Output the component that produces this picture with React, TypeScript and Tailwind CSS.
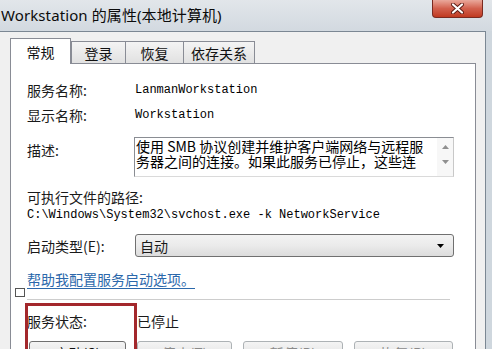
import React from "react";

const cjk = "font-['Noto_Sans_CJK_SC','Noto_Sans',sans-serif]";
const mono = "font-['Liberation_Mono','Noto_Sans_CJK_SC',monospace]";

function Tab({ label, selected, w, first }: { label: string; selected?: boolean; w: string; first?: boolean }) {
  if (selected) {
    return (
      <div
        className={`relative z-10 ${w} h-[26px] -mb-px bg-white border border-b-0 border-[#898c95] flex items-start justify-center pt-[3px] text-[14px] leading-[20px] text-[#111]`}
      >
        {label}
      </div>
    );
  }
  return (
    <div
      className={`${w} h-[22px] ${first ? "" : "-ml-px"} bg-gradient-to-b from-[#f4f4f4] to-[#e1e1e1] border border-b-0 border-[#898c95] flex items-start justify-center pt-[1px] text-[14px] leading-[20px] text-[#111]`}
    >
      {label}
    </div>
  );
}

function Btn({ label, w, enabled }: { label: string; w: string; enabled?: boolean }) {
  return (
    <div
      className={`${w} h-[23px] shrink-0 rounded-[3px] border ${
        enabled ? "border-[#707070] text-[#111]" : "border-[#adb2b5] text-[#8a8a8a]"
      } bg-gradient-to-b from-[#f4f4f4] to-[#dedede] flex items-center justify-center text-[14px] leading-[20px]`}
    >
      {label}
    </div>
  );
}

export default function App() {
  return (
    <div className={`relative w-[492px] h-[349px] overflow-hidden flex flex-col bg-[#d3dae1] ${cjk}`}>
      {/* Title bar */}
      <div className="h-[31px] shrink-0 flex items-start bg-gradient-to-b from-[#e2e6ea] to-[#d2d9e0]">
        <div className="pl-[1px] pt-[4px] text-[15px] leading-[22px] text-[#0b0b0b] font-['Noto_Sans','Noto_Sans_CJK_SC',sans-serif] tracking-[0.1px]">
          Workstation 的属性(本地计算机)
        </div>
        <div className="ml-auto mr-[9px] w-[51px] h-[18px] rounded-b-[4px] border border-t-0 border-[#7a2a20] bg-gradient-to-b from-[#e9a89b] via-[#d2604d] to-[#c0391f] flex items-center justify-center">
          <svg width="13" height="11" viewBox="0 0 13 11">
            <path d="M2 1.5 L11 9.5 M11 1.5 L2 9.5" stroke="#5b1a12" strokeWidth="4" strokeLinecap="round" />
            <path d="M2 1.5 L11 9.5 M11 1.5 L2 9.5" stroke="#ffffff" strokeWidth="2.2" strokeLinecap="round" />
          </svg>
        </div>
      </div>

      {/* Body */}
      <div className="flex flex-1 min-h-0">
        <div className="flex-1 flex flex-col bg-[#f0f0f0] border-t border-r border-[#7b8793] pt-[6px] pl-[10px] pr-[9px]">
          {/* Tabs */}
          <div className="flex items-end h-[25px]">
            <Tab label="常规" selected w="w-[61px]" />
            <Tab label="登录" w="w-[55px]" first />
            <Tab label="恢复" w="w-[59px]" />
            <Tab label="依存关系" w="w-[72px]" />
          </div>

          {/* Panel */}
          <div className="flex-1 bg-white border border-[#898c95] pl-[16px] pt-[16px] text-[14px] leading-[20px] text-[#1a1a1a]">
            <div className="flex items-center h-[20px]">
              <div className="w-[108px]">服务名称:</div>
              <div className={`${mono} text-[12px] text-black`}>LanmanWorkstation</div>
            </div>
            <div className="flex items-center h-[20px] mt-[5px]">
              <div className="w-[108px]">显示名称:</div>
              <div className={`${mono} text-[12px] text-black`}>Workstation</div>
            </div>

            <div className="flex items-start mt-[12px]">
              <div className="w-[107px] pt-[3px]">描述:</div>
              <div className="w-[320px] h-[40px] border border-[#8a8d93] border-r-[#c8c8c8] border-b-[#dadada] flex">
                <div className="flex-1 min-w-0 pl-[1px] pt-[1px] text-[14px] leading-[15px] text-black whitespace-nowrap">
                  <div>使用 SMB 协议创建并维护客户端网络与远程服</div>
                  <div>务器之间的连接。如果此服务已停止，这些连</div>
                </div>
                <div className="w-[16px] shrink-0 flex flex-col items-center bg-[#f7f7f7] pt-[7px]">
                  <svg width="7" height="4" viewBox="0 0 7 4">
                    <path d="M0 4 L3.5 0 L7 4 Z" fill="#8f8f8f" />
                  </svg>
                  <svg width="7" height="4" viewBox="0 0 7 4" className="mt-[11px]">
                    <path d="M0 0 L3.5 4 L7 0 Z" fill="#8f8f8f" />
                  </svg>
                </div>
              </div>
            </div>

            <div className="mt-[10px] h-[20px] flex items-center">可执行文件的路径:</div>
            <div className={`${mono} text-[12px] leading-[16px] h-[16px] text-black whitespace-nowrap`}>
              C:\Windows\System32\svchost.exe -k NetworkService
            </div>

            <div className="flex items-center mt-[11px]">
              <div className="w-[108px]">启动类型(E):</div>
              <div className="w-[319px] h-[23px] rounded-[3px] border border-[#707070] bg-gradient-to-b from-[#f3f3f3] via-[#ebebeb] to-[#dcdcdc] flex items-center pl-[4px] pr-[9px]">
                <span className="flex-1">自动</span>
                <svg width="7" height="4" viewBox="0 0 7 4">
                  <path d="M0 0 L7 0 L3.5 4 Z" fill="#000" />
                </svg>
              </div>
            </div>

            <div className="mt-[12px] h-[20px] flex items-center">
              <span className="text-[#2b68ab] underline underline-offset-[3px]">帮助我配置服务启动选项。</span>
            </div>

            <div className="mt-[10px] w-[423px] h-px bg-[#cdcdcd]" />

            <div className="flex items-center h-[20px] mt-[11px]">
              <div className="w-[110px]">服务状态:</div>
              <div>已停止</div>
            </div>

            <div className="flex gap-[11px] mt-[10px] ml-[2px]">
              <Btn label="启动(S)" w="w-[97px]" enabled />
              <Btn label="停止(T)" w="w-[95px]" />
              <Btn label="暂停(P)" w="w-[100px]" />
              <Btn label="恢复(R)" w="w-[99px]" />
            </div>
          </div>
        </div>
        <div className="w-[6px] bg-[#cfd7de]" />
      </div>

      {/* overlays */}
      <div className="absolute left-[15px] top-[288px] w-[10px] h-[9px] border border-[#555]" />
      <div className="absolute left-[25px] top-[303px] w-[112px] h-[60px] border-[3px] border-[#a3282c]" />
    </div>
  );
}
